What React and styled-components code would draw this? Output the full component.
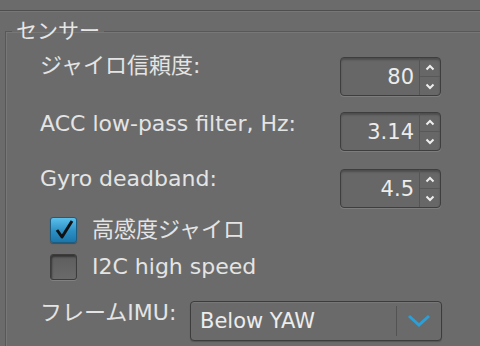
import React from 'react';
import styled, { createGlobalStyle } from 'styled-components';

const GlobalStyle = createGlobalStyle`
  html, body {
    margin: 0;
    padding: 0;
    background: #6b6b6b;
  }
  body {
    width: 480px;
    height: 346px;
    overflow: hidden;
    font-family: 'DejaVu Sans', 'Noto Sans CJK JP', sans-serif;
    color: #e4e4e4;
  }
`;

const Page = styled.div`
  width: 480px;
  height: 346px;
  overflow: hidden;
`;

const TopBar = styled.div`
  height: 10px;
  border-bottom: 1px solid #4e4e4e;
  box-shadow: 0 1px 0 #777;
`;

const Group = styled.fieldset`
  margin: 8px -20px 0 5px;
  padding: 14px 0 0 34px;
  border: 1px solid #585858;
  border-right: none;
  box-shadow: inset 1px 1px 0 #777;
  min-height: 400px;
`;

const Legend = styled.legend`
  margin-left: -28px;
  padding: 0 4px;
  font-size: 21px;
  line-height: 24px;
  color: #e6e6e6;
`;

const SpinRow = styled.div`
  display: flex;
  align-items: flex-start;
  justify-content: space-between;
  width: 401px;
  margin-bottom: ${({ $gap }) => $gap}px;
`;

const Label = styled.span`
  font-size: 22px;
  line-height: 24px;
  margin-top: ${({ $top }) => $top}px;
  white-space: nowrap;
`;

const Spinner = styled.div`
  display: flex;
  width: 101px;
  height: 39px;
  box-sizing: border-box;
  border: 1px solid #3e3e3e;
  border-radius: 4px;
  background: #676767;
  box-shadow: inset 0 2px 2px rgba(0, 0, 0, 0.25), 0 1px 0 rgba(255, 255, 255, 0.12);
`;

const SpinValue = styled.div`
  flex: 1;
  display: flex;
  align-items: center;
  justify-content: flex-end;
  padding-right: 5px;
  font-size: 21px;
  color: #ececec;
`;

const Arrows = styled.div`
  width: 20px;
  display: flex;
  flex-direction: column;
  border-left: 1px solid #555;
`;

const ArrowCell = styled.div`
  flex: 1;
  display: flex;
  align-items: center;
  justify-content: center;
  border-top: ${({ $down }) => ($down ? '1px solid #585858' : 'none')};
`;

const CheckRow = styled.label`
  display: flex;
  align-items: center;
  gap: 15px;
  margin-left: 10px;
  margin-bottom: ${({ $gap }) => $gap}px;
  font-size: 22px;
  line-height: 26px;
`;

const Box = styled.span`
  width: 27px;
  height: 26px;
  box-sizing: border-box;
  border-radius: 3px;
  display: flex;
  align-items: center;
  justify-content: center;
  background: ${({ $on }) =>
    $on ? 'linear-gradient(#5cc0ec, #2b8fc4 55%, #1d76aa)' : 'linear-gradient(#5e5e5e, #6a6a6a)'};
  border: 1px solid ${({ $on }) => ($on ? '#1f5d80' : '#3c3c3c')};
  box-shadow: ${({ $on }) =>
    $on ? '0 1px 1px rgba(0,0,0,0.3)' : 'inset 1px 2px 2px rgba(0,0,0,0.45), 0 1px 0 rgba(255,255,255,0.15)'};
`;

const SelectRow = styled.div`
  display: flex;
  align-items: flex-start;
  justify-content: space-between;
  width: 402px;
`;

const Select = styled.div`
  display: flex;
  width: 252px;
  height: 40px;
  box-sizing: border-box;
  border: 1px solid #3c3c3c;
  border-radius: 4px;
  background: #6a6a6a;
  box-shadow: inset 0 1px 1px rgba(255, 255, 255, 0.1), 0 1px 1px rgba(0, 0, 0, 0.2);
`;

const SelectValue = styled.div`
  flex: 1;
  display: flex;
  align-items: center;
  padding-left: 9px;
  font-size: 21px;
  color: #ececec;
  border-right: 1px solid #535353;
  margin: 4px 0;
`;

const SelectArrow = styled.div`
  width: 44px;
  display: flex;
  align-items: center;
  justify-content: center;
`;

const Up = () => (
  <svg width="10" height="7" viewBox="0 0 10 7">
    <path d="M1.5 5.5 L5 2 L8.5 5.5" fill="none" stroke="#eee" strokeWidth="2" />
  </svg>
);

const Down = () => (
  <svg width="10" height="7" viewBox="0 0 10 7">
    <path d="M1.5 1.5 L5 5 L8.5 1.5" fill="none" stroke="#eee" strokeWidth="2" />
  </svg>
);

const NumberSpinner = ({ value }) => (
  <Spinner>
    <SpinValue>{value}</SpinValue>
    <Arrows>
      <ArrowCell><Up /></ArrowCell>
      <ArrowCell $down><Down /></ArrowCell>
    </Arrows>
  </Spinner>
);

const Check = () => (
  <svg width="22" height="22" viewBox="0 0 22 22">
    <path d="M4 11 L9 18 L19 2" fill="none" stroke="#111" strokeWidth="3" strokeLinejoin="round" />
  </svg>
);

const App = () => {
  const rows = [
    { label: 'ジャイロ信頼度:', value: '80', top: -3, gap: 16 },
    { label: 'ACC low-pass filter, Hz:', value: '3.14', top: 0, gap: 18 },
    { label: 'Gyro deadband:', value: '4.5', top: -2, gap: 9 },
  ];

  return (
    <Page>
      <GlobalStyle />
      <TopBar />
      <Group>
        <Legend>センサー</Legend>
        {rows.map((r) => (
          <SpinRow key={r.label} $gap={r.gap}>
            <Label $top={r.top}>{r.label}</Label>
            <NumberSpinner value={r.value} />
          </SpinRow>
        ))}
        <CheckRow $gap={11}>
          <Box $on><Check /></Box>
          高感度ジャイロ
        </CheckRow>
        <CheckRow $gap={21}>
          <Box />
          I2C high speed
        </CheckRow>
        <SelectRow>
          <Label $top={0}>フレームIMU:</Label>
          <Select>
            <SelectValue>Below YAW</SelectValue>
            <SelectArrow>
              <svg width="24" height="14" viewBox="0 0 24 14">
                <path d="M2 2 L12 11 L22 2" fill="none" stroke="#2a9fd8" strokeWidth="3" />
              </svg>
            </SelectArrow>
          </Select>
        </SelectRow>
      </Group>
    </Page>
  );
};

export default App;
